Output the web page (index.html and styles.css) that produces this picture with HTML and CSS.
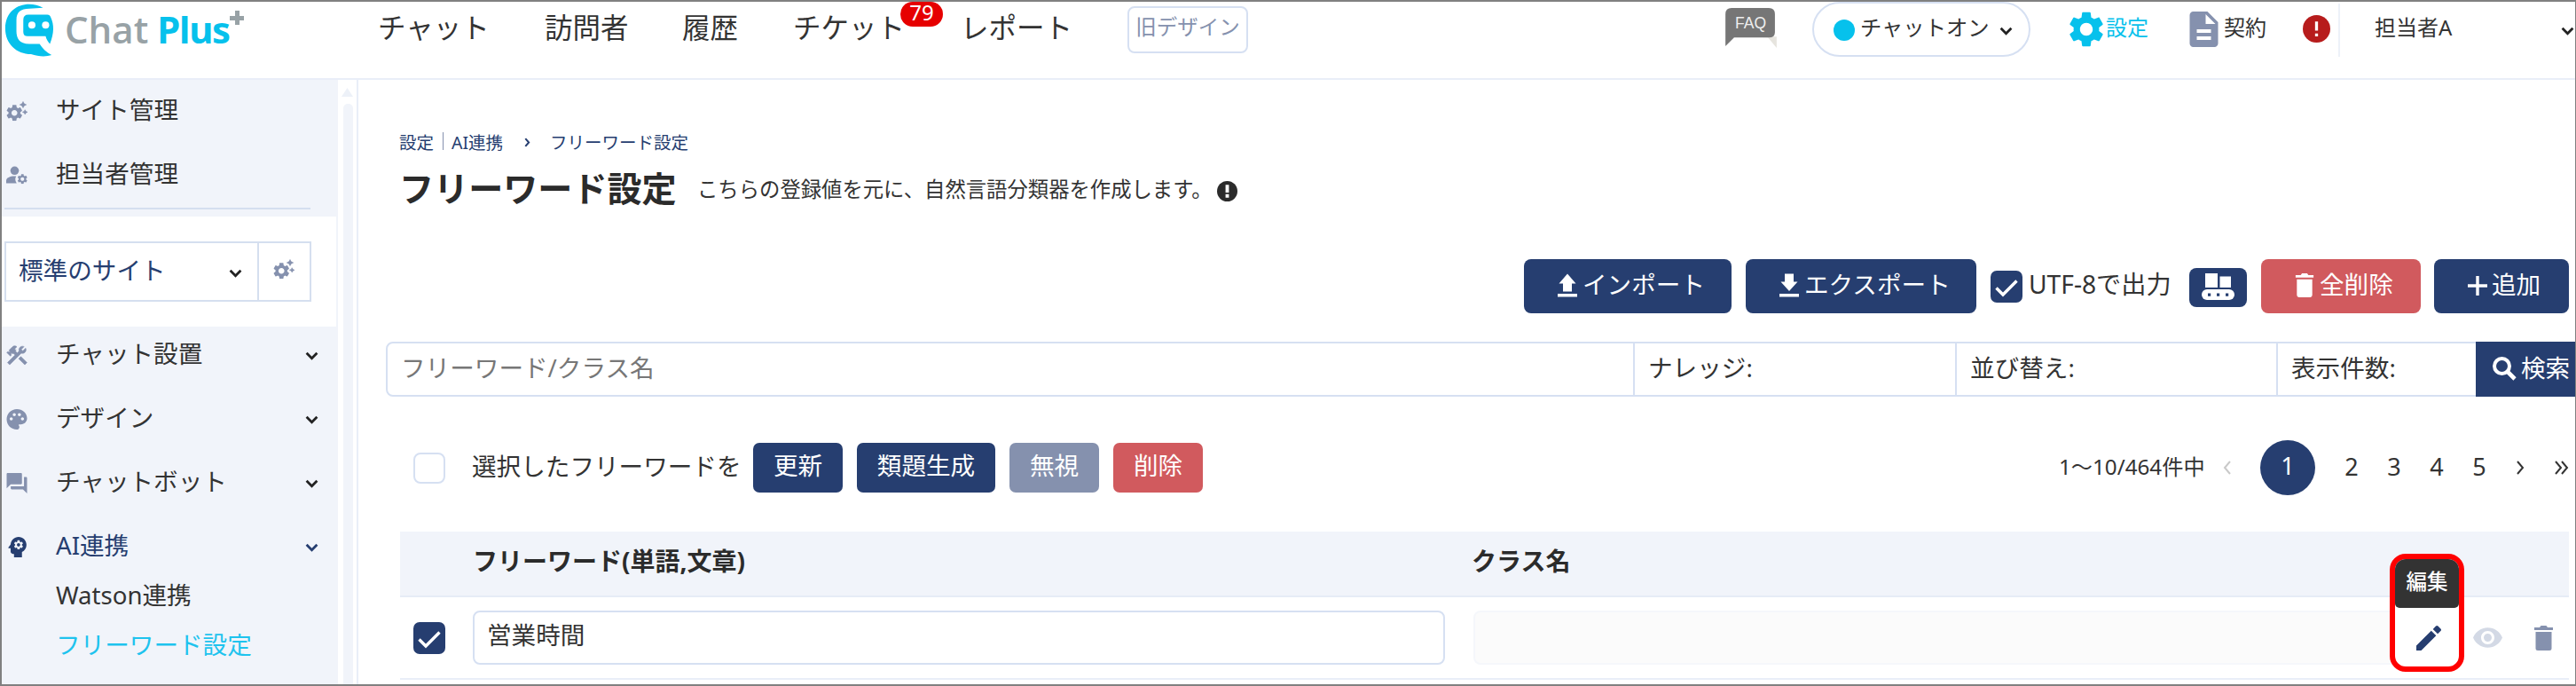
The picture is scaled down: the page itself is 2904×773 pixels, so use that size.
FILE: index.html
```html
<!DOCTYPE html>
<html lang="ja">
<head>
<meta charset="utf-8">
<title>フリーワード設定</title>
<link rel="stylesheet" href="styles.css">
</head>
<body>
<svg class="defs" aria-hidden="true">
  <symbol id="chev" viewBox="0 0 14 9"><path d="M1.500 1.500 7 7l5.500-5.500" fill="none" stroke="currentColor" stroke-width="2.600"/></symbol>
  <symbol id="gear" viewBox="2 2 20 20"><path d="M19.140 12.940c.04-.3.06-.61.06-.94 0-.32-.02-.64-.07-.94l2.030-1.580c.18-.14.23-.41.12-.61l-1.920-3.320c-.12-.22-.37-.29-.59-.22l-2.390.96c-.5-.38-1.030-.7-1.620-.94l-.36-2.540c-.04-.24-.24-.41-.48-.41h-3.840c-.24 0-.43.17-.47.41l-.36 2.540c-.59.24-1.130.57-1.620.94l-2.390-.96c-.22-.08-.47 0-.59.22L2.740 8.870c-.12.21-.08.47.12.61l2.030 1.580c-.05.3-.09.63-.09.94s.02.64.07.94l-2.030 1.580c-.18.14-.23.41-.12.61l1.920 3.320c.12.22.37.29.59.22l2.390-.96c.5.38 1.030.7 1.620.94l.36 2.540c.05.24.24.41.48.41h3.840c.24 0 .44-.17.47-.41l.36-2.540c.59-.24 1.130-.56 1.620-.94l2.390.96c.22.08.47 0 .59-.22l1.920-3.320c.12-.22.07-.47-.12-.61l-2.010-1.580zM12 15.600c-1.980 0-3.600-1.620-3.600-3.600s1.620-3.600 3.600-3.600 3.600 1.620 3.600 3.600-1.620 3.600-3.600 3.600z" fill="currentColor"/></symbol>
  <symbol id="gearspark" viewBox="0 0 24 22"><svg x="0" y="3.500" width="18.500" height="18.500"><use href="#gear"/></svg><path d="M19 0l1.200 2.300 2.500 1.200-2.500 1.200L19 7l-1.200-2.300-2.500-1.200 2.500-1.200zM21.200 9.200l.9 1.700 1.900.9-1.900.9-.9 1.700-.9-1.700-1.900-.9 1.900-.9z" fill="currentColor" stroke="currentColor" stroke-width=".6"/></symbol>
  <symbol id="usergear" viewBox="0 0 24 20"><circle cx="9.500" cy="4.800" r="4.800" fill="currentColor"/><path d="M0 19v-3c0-3 4-5 9.500-5h1.700a8 8 0 0 0 .6 8z" fill="currentColor"/><svg x="12.500" y="8.500" width="11.500" height="11.500"><use href="#gear"/></svg></symbol>
  <symbol id="tools" viewBox="2 2 20 20"><path d="M13.780 15.170l2.120-2.120 6 6-2.120 2.120zM17.500 10c1.930 0 3.500-1.570 3.500-3.500 0-.58-.16-1.120-.41-1.600l-2.700 2.700-1.490-1.490 2.700-2.700c-.48-.25-1.020-.41-1.600-.41C15.570 3 14 4.570 14 6.500c0 .41.08.8.21 1.160l-1.850 1.850-1.780-1.780.71-.71-1.410-1.410L12 3.490c-1.170-1.170-3.070-1.170-4.240 0L4.220 7.030l1.410 1.410H2.810l-.71.71 3.540 3.540.71-.71V9.150l1.410 1.410.71-.71 1.780 1.780-7.410 7.410 2.120 2.120L16.340 9.790c.36.13.75.21 1.160.21z" fill="currentColor" stroke="currentColor" stroke-width=".5"/></symbol>
  <symbol id="palette" viewBox="2 2 20 20"><path d="M12 2C6.490 2 2 6.490 2 12s4.490 10 10 10c1.380 0 2.500-1.120 2.500-2.500 0-.61-.23-1.200-.64-1.670-.08-.1-.13-.21-.13-.33 0-.28.22-.5.5-.5H16c3.310 0 6-2.690 6-6 0-4.960-4.490-9-10-9zm-5.500 11c-.83 0-1.500-.67-1.500-1.500S5.670 10 6.500 10s1.500.67 1.500 1.500S7.330 13 6.500 13zm3-4C8.670 9 8 8.330 8 7.500S8.670 6 9.500 6s1.500.67 1.500 1.500S10.330 9 9.500 9zm5 0c-.83 0-1.500-.67-1.500-1.500S13.670 6 14.500 6s1.500.67 1.500 1.500S15.330 9 14.500 9zm4.500 2.500c0 .83-.67 1.500-1.500 1.500s-1.500-.67-1.500-1.500.67-1.500 1.500-1.500 1.500.67 1.500 1.500z" fill="currentColor"/></symbol>
  <symbol id="forum" viewBox="2 2 20 20"><path d="M21 6h-2v9H6v2c0 .55.45 1 1 1h11l4 4V7c0-.55-.45-1-1-1zm-4 6V3c0-.55-.45-1-1-1H3c-.55 0-1 .45-1 1v14l4-4h10c.55 0 1-.45 1-1z" fill="currentColor"/></symbol>
  <symbol id="brain" viewBox="3 3 17 18"><path d="M13 8.570c-.79 0-1.430.64-1.430 1.430s.64 1.430 1.430 1.430 1.430-.64 1.430-1.430-.64-1.430-1.430-1.430zM13 3C9.250 3 6.200 5.940 6.020 9.640L4.100 12.200c-.25.33-.01.8.4.8H6v3c0 1.100.9 2 2 2h1v3h7v-4.680c2.360-1.120 4-3.530 4-6.320 0-3.870-3.130-7-7-7zm3 7c0 .13-.01.26-.02.39l.83.66c.08.06.1.16.05.25l-.8 1.390c-.05.09-.16.12-.24.09l-.99-.4c-.21.16-.43.29-.67.39L14 13.830c-.01.1-.1.17-.2.17h-1.600c-.1 0-.18-.07-.2-.17l-.15-1.060c-.25-.1-.47-.23-.68-.39l-.99.4c-.09.03-.2 0-.25-.09l-.8-1.390c-.05-.08-.03-.19.05-.25l.84-.66c-.01-.13-.02-.26-.02-.39s.02-.27.04-.39l-.85-.66c-.08-.06-.1-.16-.05-.26l.8-1.380c.05-.09.15-.12.24-.09l1 .4c.2-.15.43-.29.67-.39L12 6.170c.02-.1.1-.17.2-.17h1.600c.1 0 .18.070.2.170l.15 1.060c.24.1.46.23.67.39l1-.4c.09-.03.2 0 .24.09l.8 1.380c.05.09.03.2-.05.26l-.85.66c.03.12.04.25.04.39z" fill="currentColor"/></symbol>
  <symbol id="doc" viewBox="4 2 16 20"><path d="M14 2H6c-1.100 0-2 .9-2 2v16c0 1.100.9 2 2 2h12c1.100 0 2-.9 2-2V8l-6-6zm2 16H8v-2h8v2zm0-4H8v-2h8v2zm-3-5V3.500L18.500 9H13z" fill="currentColor"/></symbol>
  <symbol id="trash" viewBox="0 0 21 28"><path d="M1.500 7h18v18.500a2.500 2.500 0 0 1-2.500 2.500H4a2.500 2.500 0 0 1-2.500-2.500zM0 2h6l1.500-2h6L15 2h6v3H0z" fill="currentColor"/></symbol>
  <symbol id="check" viewBox="0 0 36 36"><path d="M6.500 19.500 14 27 29.500 11.500" fill="none" stroke="#fff" stroke-width="3.400"/></symbol>
</svg>

<header class="top">
  <div class="logo">
    <svg class="logo-mark" viewBox="0 0 58 62"><path d="M44 5C27-5 0 2 0 29c0 18 13 30 30 30 9 3 18 3 24 1-6-3-11-8-14-13H28C16 47 13 40 13 32V19C13 10 18 6 28 6z" fill="#06c1ec"/><path d="M27 13h22q3 0 4 3c4 9 4 18-1 31-2-2-4-5-5-9H26q-5 0-5-5V19q0-6 6-6z" fill="#06c1ec"/><circle cx="31" cy="25" r="4.200" fill="#fff"/><circle cx="47" cy="25" r="4.200" fill="#fff"/></svg>
    <span class="logo-chat">Chat</span><span class="logo-plus">Plus</span><span class="logo-sup"></span>
  </div>
  <nav class="nav">
    <a>チャット</a><a>訪問者</a><a>履歴</a><a class="ticket">チケット<span class="badge">79</span></a><a>レポート</a>
  </nav>
  <a class="old">旧デザイン</a>
  <div class="tools">
    <span class="faq"><svg viewBox="0 0 60 46"><path d="M22 33h37v13L49 34z" fill="#e6e4de"/><path d="M7 0h43q7 0 7 7v21q0 6-7 6H10L0 44V7q0-7 7-7z" fill="#767676"/></svg><b>FAQ</b></span>
    <span class="pill"><i></i><span>チャットオン</span><svg class="chev"><use href="#chev"/></svg></span>
    <a class="cfg"><svg><use href="#gear"/></svg><span>設定</span></a>
    <a class="deal"><svg><use href="#doc"/></svg><span>契約</span></a>
    <svg class="alert" viewBox="0 0 30 30"><circle cx="15" cy="15" r="15" fill="#b71c1c"/><path d="M13.400 7h3.200v10h-3.200zM13.400 20h3.200v3.200h-3.200z" fill="#fff"/></svg>
    <span class="me"><span>担当者A</span><svg class="chev"><use href="#chev"/></svg></span>
  </div>
</header>

<div class="body">
  <aside class="side">
    <div class="menu">
      <div class="group">
        <a class="item"><svg class="ic"><use href="#gearspark"/></svg>サイト管理</a>
        <a class="item"><svg class="ic"><use href="#usergear"/></svg>担当者管理</a>
      </div>
      <div class="site">
        <div class="select"><span>標準のサイト</span><svg class="chev"><use href="#chev"/></svg></div>
        <div class="site-cfg"><svg><use href="#gearspark"/></svg></div>
      </div>
      <div class="group2">
        <a class="item"><svg class="ic"><use href="#tools"/></svg><span>チャット設置</span><svg class="chev"><use href="#chev"/></svg></a>
        <a class="item"><svg class="ic"><use href="#palette"/></svg><span>デザイン</span><svg class="chev"><use href="#chev"/></svg></a>
        <a class="item"><svg class="ic"><use href="#forum"/></svg><span>チャットボット</span><svg class="chev"><use href="#chev"/></svg></a>
        <a class="item navy"><svg class="ic"><use href="#brain"/></svg><span>AI連携</span><svg class="chev"><use href="#chev"/></svg></a>
        <a class="sub">Watson連携</a>
        <a class="sub cyan">フリーワード設定</a>
      </div>
    </div>
    <div class="scroll"><svg viewBox="0 0 13 10"><path d="M6.500 0 13 10H0z" fill="#edf1f8"/></svg><i></i></div>
  </aside>

  <main class="main">
    <div class="crumbs"><span>設定</span><i></i><span>AI連携</span><svg viewBox="0 0 6 10"><path d="M1 1l3.500 4L1 9" fill="none" stroke="currentColor" stroke-width="1.800"/></svg><span>フリーワード設定</span></div>
    <div class="title"><h1>フリーワード設定</h1><p>こちらの登録値を元に、自然言語分類器を作成します。</p><svg viewBox="0 0 24 24"><circle cx="12" cy="12" r="12" fill="#2b2b2b"/><path d="M10 4.500h4v9h-4zM10 15.500h4v4h-4z" fill="#fff"/></svg></div>

    <div class="bar">
      <a class="btn import"><svg viewBox="0 0 22 26"><path d="M11 0l9.500 11H16v9H6v-9H1.500zM0 22.500h22V26H0z" fill="#fff"/></svg>インポート</a>
      <a class="btn export"><svg viewBox="0 0 22 26"><path d="M6 0h10v9h4.500L11 19.500 1.500 9H6zM0 22.500h22V26H0z" fill="#fff"/></svg>エクスポート</a>
      <label class="utf"><svg class="cb"><use href="#check"/></svg>UTF-8で出力</label>
      <a class="train"><svg viewBox="0 0 37 30"><path d="M4 0h14v16H4zM20.500 3.500H33V16H20.500z" fill="#fff"/><rect y="18" width="37" height="12" rx="6" fill="#fff"/><path d="M7 22.500h3.200v3.200H7zM17 22.500h3.200v3.200H17zM27 22.500h3.200v3.200H27z" fill="#263e70"/></svg></a>
      <a class="btn all-del"><svg><use href="#trash"/></svg>全削除</a>
      <a class="btn add"><svg viewBox="0 0 22 22"><path d="M11 0v22M0 11h22" stroke="#fff" stroke-width="3.400"/></svg>追加</a>
    </div>

    <div class="search">
      <span class="kw">フリーワード/クラス名</span><span class="knowledge">ナレッジ:</span><span class="sort">並び替え:</span><span class="count">表示件数:</span>
      <a><svg viewBox="0 0 27 27"><circle cx="10.500" cy="10.500" r="8.500" fill="none" stroke="#fff" stroke-width="4"/><path d="M16.500 16.500 25 25" stroke="#fff" stroke-width="4.600"/></svg>検索</a>
    </div>

    <div class="bulk">
      <span class="box"></span><span class="lead">選択したフリーワードを</span>
      <a class="sbtn">更新</a><a class="sbtn w4">類題生成</a><a class="sbtn gray">無視</a><a class="sbtn red">削除</a>
      <div class="pages"><span class="range">1～10/464件中</span>
        <svg class="ar prev" viewBox="0 0 9 16"><path d="M8 1 2 8l6 7" fill="none" stroke="#c9c9c9" stroke-width="2"/></svg>
        <b>1</b><span>2</span><span>3</span><span>4</span><span>5</span>
        <svg class="ar next" viewBox="0 0 9 16"><path d="M1 1l6 7-6 7" fill="none" stroke="#333" stroke-width="2"/></svg>
        <svg class="ar last" viewBox="0 0 16 16"><path d="M1 1l6 7-6 7M8 1l6 7-6 7" fill="none" stroke="#333" stroke-width="2"/></svg>
      </div>
    </div>

    <div class="table">
      <div class="head"><span class="c1">フリーワード(単語,文章)</span><span>クラス名</span></div>
      <div class="row">
        <svg class="cb"><use href="#check"/></svg>
        <div class="word">営業時間</div>
        <div class="class"></div>
        <div class="edit">
          <svg viewBox="0 0 28 28"><path d="M0 22.500V28h5.500L22.300 11.200l-5.500-5.500zM27.400 6c.8-.8.8-1.800 0-2.500L24.500.6c-.8-.8-1.800-.8-2.500 0l-3.300 3.300 5.400 5.400z" fill="#263e70"/></svg>
          <div class="mark"><span>編集</span></div>
        </div>
        <svg class="eye" viewBox="1 4.500 22 15"><path d="M12 4.500C7 4.500 2.730 7.610 1 12c1.730 4.390 6 7.500 11 7.500s9.270-3.110 11-7.500c-1.730-4.390-6-7.500-11-7.500zM12 17c-2.760 0-5-2.240-5-5s2.240-5 5-5 5 2.240 5 5-2.240 5-5 5zm0-8c-1.660 0-3 1.340-3 3s1.340 3 3 3 3-1.340 3-3-1.340-3-3-3z" fill="#d3d9e5"/></svg>
        <svg class="del"><use href="#trash"/></svg>
      </div>
    </div>
  </main>
</div>
</body>
</html>
```
FILE: styles.css
```css
* { box-sizing: border-box; }
html, body { margin: 0; }
body {
  width: 2904px; height: 773px; overflow: hidden;
  border: 2px solid #808080; border-right-width: 1px;
  background: #fff; color: #333; white-space: nowrap;
  font-family: "Noto Sans", "Noto Sans CJK JP", sans-serif;
  font-size: 27.600px;
}
svg { display: block; flex: none; }
.defs { position: absolute; width: 0; height: 0; }
.chev { width: 15px; height: 10px; color: #222; }

/* header */
.top { display: flex; align-items: flex-start; height: 88px; border-bottom: 2px solid #e9eef8; }
.logo { display: flex; width: 424px; padding: 2px 0 0 3px; font-family: "Open Sans", sans-serif; font-weight: 600; font-size: 42px; line-height: 57px; }
.logo-mark { width: 58px; height: 60px; }
.logo-chat { width: 114px; padding-left: 10px; color: #98a2a6; }
.logo-plus { width: 77px; color: #06c1ec; font-weight: 700; letter-spacing: -1.600px; }
.logo-sup { width: 16px; height: 16px; margin: 8px 0 0 5px; background: linear-gradient(#98a2a6, #98a2a6) 50% / 5px 16px no-repeat, linear-gradient(#98a2a6, #98a2a6) 50% / 16px 5px no-repeat; }
.nav { display: grid; grid-template-columns: 188px 155px 125px 189px 188px; line-height: 57px; font-size: 31.500px; }
.ticket { position: relative; }
.badge { position: absolute; left: 121px; top: 0; width: 48px; height: 28px; border-radius: 14px; background: #e60000; color: #fff; font-size: 24px; line-height: 23px; text-align: center; }
.old { width: 136px; height: 53px; margin-top: 5px; border: 2px solid #d6e0f2; border-radius: 8px; color: #8591ae; font-size: 23.500px; line-height: 43px; text-align: center; }
.tools { display: flex; align-items: flex-start; margin-left: 538px; font-size: 24px; line-height: 57px; }
.faq { position: relative; width: 98px; padding-top: 7px; }
.faq svg { width: 59px; height: 45px; }
.faq b { position: absolute; left: 0; top: 7px; width: 57px; color: #eee; font: 400 17.500px/34px "Liberation Sans", sans-serif; text-align: center; }
.pill { display: flex; align-items: center; width: 246px; height: 62px; border: 2px solid #d6e0f2; border-radius: 31px; padding: 0 0 5px 22px; font-size: 24.300px; }
.pill i { width: 24px; height: 24px; margin-top: 7px; border-radius: 50%; background: #06c1ec; }
.pill span { width: 163px; padding-left: 6px; }
.pill .chev { margin-top: 8px; }
.cfg { display: flex; margin-left: 43px; width: 136px; color: #06c1ec; }
.cfg svg { width: 40px; height: 40px; margin: 11px 2px 0 0; }
.deal { display: flex; width: 128px; }
.deal svg { width: 33px; height: 40px; margin: 11px 6px 0 0; color: #8591ae; }
.alert { width: 31px; height: 31px; margin-top: 15px; }
.me { display: flex; margin: 2px 0 0 9px; height: 60px; border-left: 2px solid #edf1f8; padding-left: 39px; line-height: 53px; }
.me span { width: 210px; }
.me .chev { margin-top: 26px; }

/* sidebar */
.body { display: flex; height: 681px; }
.side { display: flex; width: 400px; }
.menu { width: 379px; background: #f1f4fa; }
.item { display: flex; align-items: center; height: 72px; padding-left: 5px; }
.item .ic { width: 24px; height: 23px; margin: 6px 32px 0 0; color: #8591ae; }
.item span { width: 281px; }
.item .chev { margin-top: 7px; }
.navy, .item.navy .ic, .item.navy .chev { color: #263e70; }
.group { height: 148px; background: linear-gradient(#d5dfef, #d5dfef) 3px 144px / 345px 2px no-repeat; }
.group .item { height: 71px; padding-bottom: 8px; }
.group .item + .item { height: 74px; padding-bottom: 9px; }
.group .ic { margin-top: 8px; }
.site { display: flex; width: 377px; height: 124px; margin-top: 6px; padding: 28px 0 0 3px; background: #fff; }
.select { display: flex; width: 286px; height: 68px; padding-left: 14px; border: 2px solid #d5dfef; border-right-width: 1px; line-height: 60px; color: #263e70; }
.select span { width: 237px; }
.select .chev { margin-top: 29px; }
.site-cfg { width: 60px; height: 68px; border: 2px solid #d5dfef; border-left-width: 1px; color: #8591ae; }
.site-cfg svg { width: 24px; height: 23px; margin: 18px 0 0 16px; }
.group2 { margin-top: -7px; }
.sub { display: block; height: 56px; line-height: 56px; padding-left: 61px; }
.item.navy + .sub { margin-top: -7px; }
.cyan { color: #1ec3ee; }
.scroll { width: 21px; padding: 9px 0 0 4px; }
.scroll svg { width: 13px; height: 10px; }
.scroll i { display: block; width: 11px; height: 670px; margin: 8px 0 0 2px; border-radius: 5px; background: #f1f4fa; }

/* main */
.main { width: 2501px; border-left: 2px solid #e9eef8; padding: 55px 0 0 31px; }
.crumbs { display: flex; align-items: center; height: 28px; padding-left: 15px; color: #263e70; font-size: 19.500px; }
.crumbs i { width: 1px; height: 20px; margin: 0 9px 0 10px; background: #8591ae; }
.crumbs svg { width: 7px; height: 11px; margin: 2px 22px 0 24px; }
.title { display: flex; align-items: center; height: 48px; margin-top: 15px; padding-left: 15px; }
.title h1 { width: 336px; margin: 0; color: #2b2b2b; font-size: 39.100px; line-height: 48px; }
.title p { width: 586px; margin: 0; font-size: 23.350px; }
.title svg { width: 23px; height: 23px; margin-top: 7px; }
.bar { display: flex; align-items: flex-start; height: 61px; margin: 56px 0 32px; padding-left: 1283px; }
.btn { display: flex; height: 61px; border-radius: 8px; background: #263e70; color: #fff; line-height: 57px; }
.btn svg { width: 22px; height: 27px; margin: 16px 6px 0 0; }
.import { width: 234px; padding-left: 38px; }
.export { width: 260px; margin-left: 16px; padding-left: 38px; }
.utf { display: flex; width: 208px; margin-left: 16px; line-height: 57px; font-size: 28.200px; }
.cb { width: 36px; height: 36px; border-radius: 7px; background: #263e70; }
.utf .cb { margin: 13px 7px 0 0; }
.train { width: 65px; height: 44px; margin: 10px 16px 0; border-radius: 8px; background: #263e70; }
.train svg { width: 37px; height: 30px; margin: 6px 0 0 14px; }
.all-del { width: 180px; padding-left: 38px; background: #d15a5e; }
.add { width: 152px; margin-left: 15px; padding-left: 38px; }
.add svg { width: 22px; height: 22px; margin: 19px 5px 0 0; }
.search { display: flex; height: 62px; line-height: 54px; }
.search > span { height: 62px; border: 2px solid #d6e0f2; border-left-width: 0; padding-left: 15px; }
.search .kw { width: 1408px; border-left-width: 2px; border-radius: 8px 0 0 8px; color: #777; }
.search .knowledge { width: 363px; }
.search .sort { width: 362px; }
.search .count { width: 223px; border-right: 0; }
.search a { display: flex; width: 112px; padding: 2px 0 0 19px; background: #263e70; color: #fff; }
.search a svg { width: 27px; height: 27px; margin: 15px 5px 0 0; }
.bulk { display: flex; align-items: center; height: 62px; margin: 49px 0 41px; padding: 0 0 0 31px; }
.box { width: 36px; height: 35px; border: 2px solid #d6e0f2; border-radius: 8px; margin-right: 30px; }
.lead { width: 317px; line-height: 56px; margin-top: -4px; }
.sbtn { width: 101px; height: 56px; margin-right: 16px; border-radius: 7px; background: #263e70; color: #fff; text-align: center; line-height: 51px; }
.w4 { width: 156px; }
.gray { background: #8591ae; }
.red { background: #d15a5e; }
.pages { display: flex; align-items: center; margin-left: 949px; font-size: 27px; line-height: 58px; }
.pages .range { width: 185px; font-size: 24.200px; text-align: left; }
.pages span { width: 48px; margin-top: -3px; text-align: center; }
.pages b { width: 62px; height: 62px; margin: 0 17px 0 33px; border-radius: 50%; background: #263e70; color: #fff; font-weight: 400; text-align: center; }
.ar { width: 9px; height: 16px; }
.ar.next { margin-left: 18px; }
.ar.last { width: 16px; margin-left: 34px; }
.table { width: 2445px; margin-left: 16px; }
.head { display: flex; height: 74px; padding-left: 82px; border-bottom: 2px solid #e6ecf6; background: #f1f4fa; color: #2b2b2b; font-weight: 700; font-size: 28px; line-height: 66px; }
.head .c1 { width: 1126px; }
.row { display: flex; height: 93px; padding: 15px 0 0 15px; border-bottom: 2px solid #e9eef8; }
.row .cb { margin: 13px 31px 0 0; }
.word { width: 1096px; height: 61px; padding-left: 14px; border: 2px solid #d6e0f2; border-radius: 8px; line-height: 50px; }
.class { width: 1039px; height: 61px; margin-left: 32px; border: 2px solid #f5f7fb; border-radius: 8px 0 0 8px; background: #fbfbfb; }
.edit { position: relative; width: 88px; padding: 17px 0 0 24px; }
.edit > svg { width: 28px; height: 28px; }
.mark { position: absolute; left: -6px; top: -64px; width: 84px; height: 133px; border: 6px solid #f00; border-radius: 18px; overflow: hidden; }
.mark span { display: block; height: 55px; background: #333; border-radius: 0 0 5px 5px; color: #fff; font-size: 23.500px; font-weight: 500; line-height: 51px; text-align: center; }
.eye { width: 33px; height: 23px; margin: 19px 36px 0 0; }
.del { width: 21px; height: 28px; margin-top: 17px; color: #8591ae; }
```
